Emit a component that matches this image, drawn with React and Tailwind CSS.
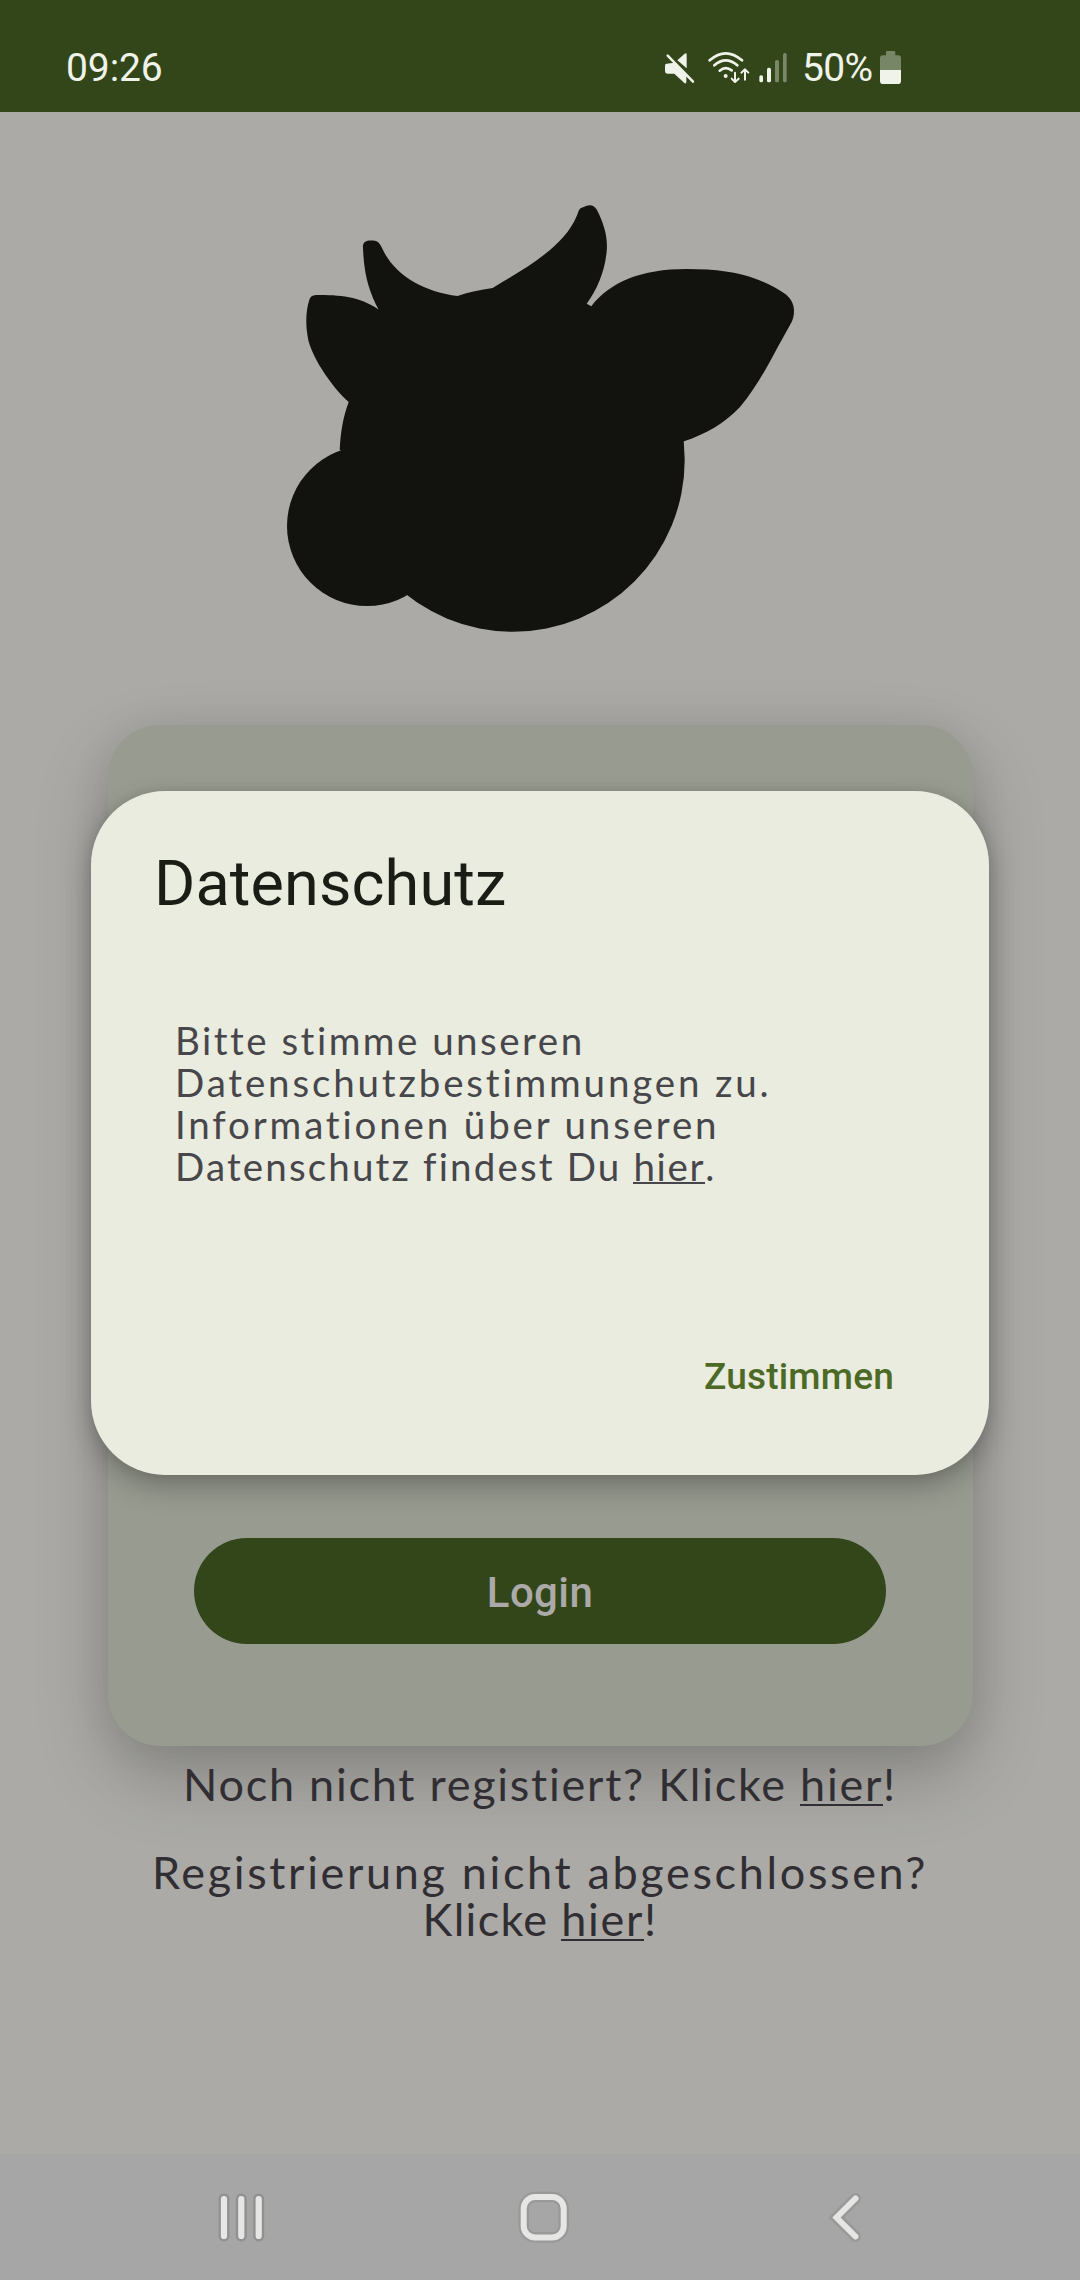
const comfy = "font-['Lato',sans-serif]";

function StatusBar() {
  return (
    <header className="flex h-[112px] shrink-0 bg-[#33461a] text-[#f0f3ea] font-['Roboto',sans-serif] text-[39px] leading-[46px]">
      <span className="mt-[45px] ml-[66px] w-[598px] tracking-[-0.1px]">09:26</span>
      <svg className="mt-[50px] h-[35px] w-[31px]" viewBox="72 60 93 105" fill="#f0f3ea">
        <path d="M80 101 Q75 101 75 107 V124 Q75 131 82 131 H103 L134 160 Q139 161 139 156 V132 L103 98 Z" />
        <path d="M112 91 L134 71 Q140 68 140 74 V115 Z" />
        <path d="M86 72 L162 150" stroke="#33461a" strokeWidth="8" />
        <path d="M83 77 L159 155" stroke="#f0f3ea" strokeWidth="7.5" strokeLinecap="round" />
      </svg>
      <svg className="mt-[50px] ml-[12px] h-[35px] w-[43px]" viewBox="201 60 129 105" fill="none" stroke="#f0f3ea" strokeLinecap="round" strokeLinejoin="round">
        <path d="M209 91 Q257 49 306 91" strokeWidth="8" />
        <path d="M223 106 Q257 76 292 106" strokeWidth="8" />
        <path d="M239 122 Q257 107 275 121" strokeWidth="8" />
        <circle cx="257" cy="138" r="6" fill="#f0f3ea" stroke="none" />
        <path d="M285 128 V154 M275 146 L285 156 L296 146" strokeWidth="6" />
        <path d="M315 149 V119 M304 128 L315 118 L325 128" strokeWidth="6" />
      </svg>
      <svg className="mt-[50px] ml-[8px] h-[35px] w-[30px]" viewBox="354 60 90 105" fill="#f0f3ea">
        <rect x="358" y="136" width="11" height="21" rx="5" />
        <rect x="381" y="113" width="12" height="44" rx="5" />
        <rect x="405" y="90" width="12" height="67" rx="5" opacity="0.38" />
        <rect x="429" y="69" width="11" height="88" rx="5" opacity="0.38" />
      </svg>
      <span className="mt-[45px] ml-[14px] w-[77px] tracking-[-0.7px]">50%</span>
      <svg className="mt-[50px] h-[35px] w-[23px]" viewBox="717 60 69 105">
        <path d="M738 66 Q738 63 742 63 H761 Q766 63 766 67 V76 H775 Q783 76 783 85 V120 H720 V85 Q720 76 729 76 H738 Z" fill="#788668" />
        <path d="M720 120 H783 V152 Q783 162 774 162 H729 Q720 162 720 152 Z" fill="#f0f3ea" />
      </svg>
    </header>
  );
}

function CowLogo() {
  return (
    <svg className="mt-[88px] ml-[280px] h-[436px] w-[520px] shrink-0" viewBox="280 200 520 436" fill="#12120f">
      <circle cx="513" cy="460" r="171.7" />
      <circle cx="367" cy="526" r="80" />
      <path d="M348.7 402 C333 388 314 361 308.5 341 C305 324 306 311 309 301 Q310 295 316 295 C340 295 359 296 378.5 309.5 C370 293 364 277 363 248 C362 241 368 240 372 240.5 C377 240 380 243 382 248 C394 275 424 292 457.5 296 C469 292 480 290 492.7 288 C514 275 532 265 550 250 C563 239 574 226 579 210 Q580 208 583 207.300 C590 203.500 594 205 597 210 C604 224 608 237 606.700 251 C605 271 597 290 586.700 303.700 L591.300 306.300 C610 282 641 269 686.700 269 C716 269 738 272 756 279 C767 283 778 289 786 294.500 C791 299 794 304 794 311 C794 316 793 320 790 325 L776.700 349 C765 371 755 389 740 407 C725 423 706 434 684 441.300 L600 520 L400 480 L339.700 450 C340.500 433 343 417 348.700 402 Z" />
    </svg>
  );
}

function LoginCard() {
  return (
    <section className="mt-[89px] ml-[108px] flex h-[1021px] w-[865px] shrink-0 flex-col justify-end rounded-[52px] bg-[#989b90] px-[86px] pb-[102px] shadow-[0_30px_72px_rgba(0,0,0,0.22),0_2px_40px_rgba(0,0,0,0.07)]">
      <button className="h-[106px] w-[692px] rounded-full bg-[#33461a] pt-[2px] font-['Roboto',sans-serif] text-[42px] font-medium tracking-[0.4px] text-[#abaaa8]">
        Login
      </button>
    </section>
  );
}

function HierLink({ className }) {
  return <a className={`border-b-[2.5px] border-current ${className}`}>hier</a>;
}

function Dialog() {
  return (
    <div className="absolute top-[791px] left-[91px] flex h-[684px] w-[898px] flex-col rounded-[74px] bg-[#e9ecde] shadow-[0_12px_28px_rgba(0,0,0,0.26),0_0_12px_rgba(0,0,0,0.08)]">
      <h1 className="mt-[56px] ml-[63px] font-['Roboto',sans-serif] text-[63px] leading-[74px] tracking-[0.1px] text-[#1a1c16]">Datenschutz</h1>
      <div className={`${comfy} mt-[98px] ml-[84px] text-[38.5px] leading-[42px] whitespace-nowrap text-[#47464b]`}>
        <p className="tracking-[2.5px]">Bitte stimme unseren</p>
        <p className="tracking-[2.85px]">Datenschutzbestimmungen zu.</p>
        <p className="tracking-[2.85px]">Informationen über unseren</p>
        <p className="tracking-[2.15px]">Datenschutz findest Du <HierLink className="inline-block h-[39px] tracking-[1.7px]" />.</p>
      </div>
      <button className="mt-auto mr-[95px] mb-[74px] self-end font-['Roboto',sans-serif] text-[37px] font-medium leading-[48px] tracking-[0.2px] text-[#4c6a26]">Zustimmen</button>
    </div>
  );
}

function NavBar() {
  return (
    <nav className="flex h-[126px] shrink-0 bg-[#a6a6a6]">
      <svg className="mt-[36px] ml-[216px] h-[54px] w-[51px]" viewBox="216 2190 51 54">
        <path d="M224 2199 V2236 M241.300 2199 V2236 M258.700 2199 V2236" stroke="#919191" strokeWidth="11" strokeLinecap="round" />
        <path d="M224 2199 V2236 M241.300 2199 V2236 M258.700 2199 V2236" stroke="#e6e6e5" strokeWidth="6.200" strokeLinecap="round" />
      </svg>
      <svg className="mt-[36px] ml-[248px] h-[54px] w-[58px]" viewBox="515 2190 58 54" fill="none">
        <rect x="523.700" y="2197" width="40" height="40.500" rx="11.500" stroke="#999999" strokeWidth="10.500" />
        <rect x="523.700" y="2197" width="40" height="40.500" rx="11.500" stroke="#e6e6e5" strokeWidth="6" />
      </svg>
      <svg className="mt-[36px] ml-[255px] h-[54px] w-[38px]" viewBox="828 2190 38 54" fill="none" strokeLinecap="round">
        <path d="M855.500 2198.500 L836.500 2217.500 L855.500 2236.500" stroke="#999999" strokeWidth="11" />
        <path d="M855.500 2198.500 L836.500 2217.500 L855.500 2236.500" stroke="#e6e6e5" strokeWidth="6" />
      </svg>
    </nav>
  );
}

export default function App() {
  return (
    <div className="relative flex h-[2280px] w-[1080px] flex-col overflow-hidden bg-[#abaaa6]">
      <StatusBar />
      <main className="flex min-h-0 flex-1 flex-col">
        <CowLogo />
        <LoginCard />
        <div className={`${comfy} relative mt-[15px] text-center text-[45px] leading-[47px] whitespace-nowrap text-[#302e33]`}>
          <p className="tracking-[1.75px]">Noch nicht registiert? Klicke <HierLink className="inline-block h-[45px]" />!</p>
          <p className="mt-[41px] tracking-[2.65px]">Registrierung nicht abgeschlossen?</p>
          <p className="tracking-[1.3px]">Klicke <HierLink className="inline-block h-[45px] tracking-[1.7px]" />!</p>
        </div>
      </main>
      <NavBar />
      <Dialog />
    </div>
  );
}
